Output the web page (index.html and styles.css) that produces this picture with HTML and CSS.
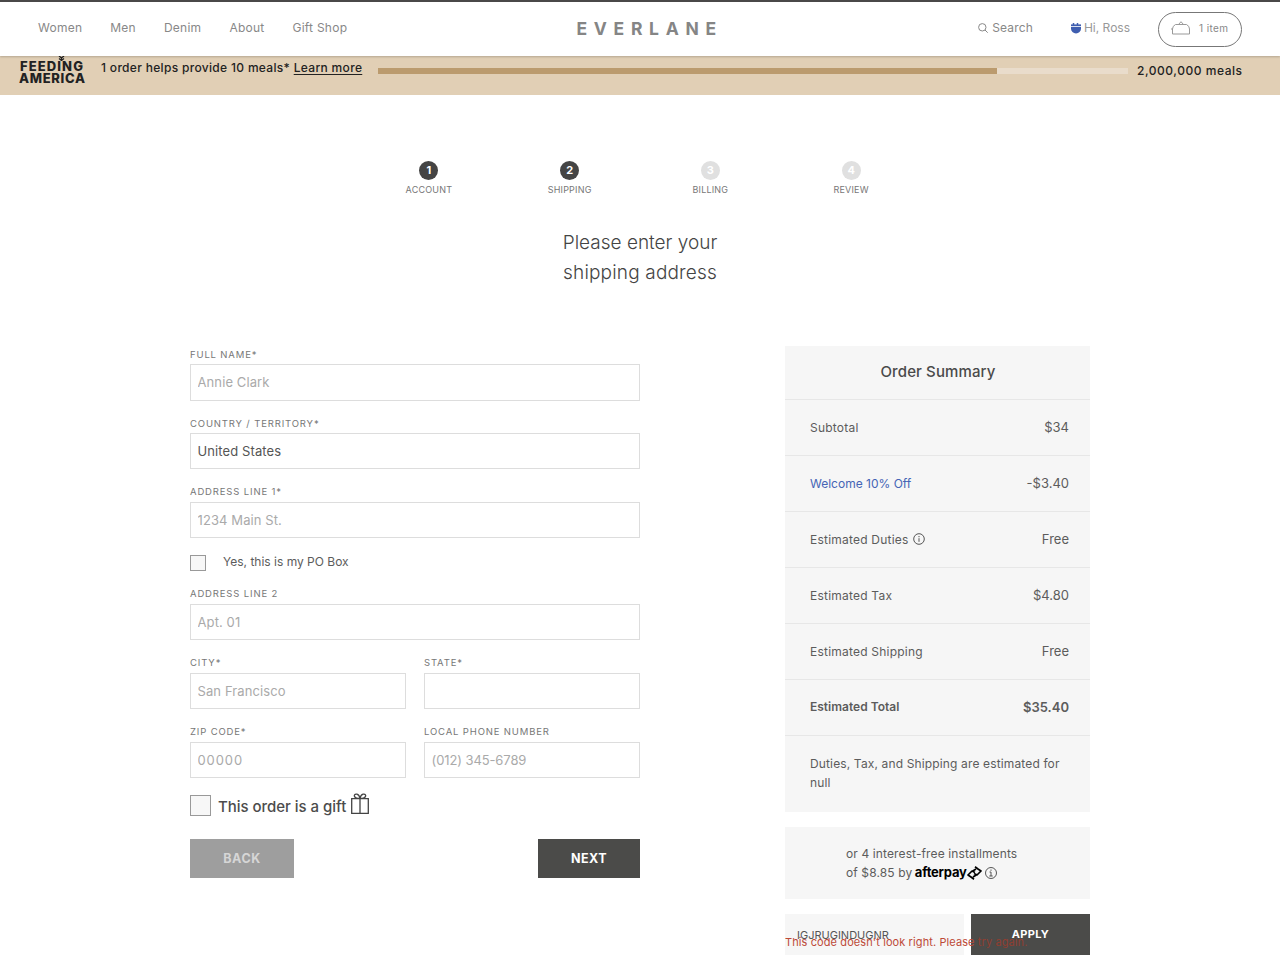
FILE: index.html
```html
<!doctype html>
<html lang="en">
<head>
  <meta charset="utf-8">
  <title>Everlane - Shipping</title>
  <link rel="stylesheet" href="styles.css">
</head>
<body>
  <header class="header">
    <nav class="nav">
      <a>Women</a>
      <a>Men</a>
      <a>Denim</a>
      <a>About</a>
      <a>Gift Shop</a>
    </nav>
    <div class="logo">EVERLANE</div>
    <div class="tools">
      <a class="search">
        <svg width="10" height="10" viewBox="0 0 10 10" fill="none" stroke="#888"><circle cx="4.3" cy="4.3" r="3.7"/><path d="M7 7l2.7 2.7"/></svg>
        <span>Search</span>
      </a>
      <a class="account">
        <svg width="10" height="12" viewBox="0 0 10 12"><path d="M0 5h10v1.500a5 5 0 0 1-10 0z" fill="#3f5eb0"/><path d="M0 3.300h10" stroke="#3f5eb0" stroke-width="1.800"/><path d="M2.500 1v2M6.500 1v2" stroke="#3f5eb0" stroke-width="1.500"/></svg>
        <span>Hi, Ross</span>
      </a>
      <a class="bag">
        <svg width="20" height="14" viewBox="0 0 20 14" fill="none" stroke="#999"><path d="M4.500 3.500h11q3 1.500 3 4.500v5h-17V8q0-3 3-4.500zM7.500 3.500L10 .7l2.500 2.800M0 8h1.500"/></svg>
        <span>1 item</span>
      </a>
    </div>
  </header>

  <section class="banner">
    <div class="feeding">
      <svg class="wheat" width="7" height="5" viewBox="0 0 7 5" stroke="#222" stroke-width="1.3"><path d="M1 0l2.500 2L6 0M1 2.500l2.500 2 2.500-2M3.500 1v4" fill="none"/></svg>
      <span class="feeding-top">FEEDING</span>
      <span class="feeding-bottom">AMERICA</span>
    </div>
    <p class="banner-text">1 order helps provide 10 meals* <u>Learn more</u></p>
    <div class="progress"><div class="progress-bar"></div></div>
    <span class="meals">2,000,000 meals</span>
  </section>

  <ol class="steps">
    <li class="done"><b>1</b><span>ACCOUNT</span></li>
    <li class="done"><b>2</b><span>SHIPPING</span></li>
    <li><b>3</b><span>BILLING</span></li>
    <li><b>4</b><span>REVIEW</span></li>
  </ol>

  <h1>Please enter your<br><span>shipping address</span></h1>

  <main class="checkout">
    <form class="shipping">
      <div class="field first">
        <label>FULL NAME*</label>
        <input type="text" placeholder="Annie Clark">
      </div>
      <div class="field country">
        <label>COUNTRY / TERRITORY*</label>
        <input type="text" value="United States">
      </div>
      <div class="field">
        <label>ADDRESS LINE 1*</label>
        <input type="text" placeholder="1234 Main St.">
      </div>
      <div class="po-box"><i class="box"></i><span>Yes, this is my PO Box</span></div>
      <div class="field">
        <label>ADDRESS LINE 2</label>
        <input type="text" placeholder="Apt. 01">
      </div>
      <div class="field-row">
        <div class="field">
          <label>CITY*</label>
          <input type="text" placeholder="San Francisco">
        </div>
        <div class="field">
          <label>STATE*</label>
          <input type="text">
        </div>
      </div>
      <div class="field-row">
        <div class="field">
          <label>ZIP CODE*</label>
          <input type="text" class="zip" placeholder="00000">
        </div>
        <div class="field">
          <label>LOCAL PHONE NUMBER</label>
          <input type="text" class="phone" placeholder="(012) 345-6789">
        </div>
      </div>
      <div class="gift">
        <i class="box"></i>
        <span>This order is a gift</span>
        <svg width="18" height="22" viewBox="0 0 18 22" fill="none" stroke="#444" stroke-width="1.300"><path d="M.7 5.700h16.600v14.600H.7zM9 5.500v14.800M9 5.500C6 5.500 3 4.500 3.300 2.500S8 0 9 5.500zM9 5.500c3 0 6-1 5.700-3S10 0 9 5.500z"/></svg>
      </div>
      <div class="buttons">
        <button type="button" class="back">BACK</button>
        <button type="button" class="next">NEXT</button>
      </div>
    </form>

    <aside class="sidebar">
      <div class="summary">
        <h2>Order Summary</h2>
        <div class="line"><span>Subtotal</span><em>$34</em></div>
        <div class="line promo"><span>Welcome 10% Off</span><em>-$3.40</em></div>
        <div class="line">
          <span>Estimated Duties <svg class="info" width="12" height="12" viewBox="0 0 12 12" fill="none" stroke="#555"><circle cx="6" cy="6" r="5.300"/><path d="M6 5.200v3.600M6 3v1.200"/></svg></span>
          <em>Free</em>
        </div>
        <div class="line"><span>Estimated Tax</span><em>$4.80</em></div>
        <div class="line"><span>Estimated Shipping</span><em>Free</em></div>
        <div class="line total"><span>Estimated Total</span><em>$35.40</em></div>
        <p class="note">Duties, Tax, and Shipping are estimated for null</p>
      </div>

      <div class="installments">
        <div>or 4 interest-free installments</div>
        <div class="by">of $8.85 by <strong>afterpay</strong><svg class="loop" width="15" height="14" viewBox="0 0 15 14" fill="none" stroke="#000" stroke-width="1.700" stroke-linejoin="round"><path d="M5 5.500L9 3M8 .8L11 3 14 5 10 9 7 7.500M10 8.500L6 11M7 13.200L4 11 1 9 5 5 8 6.500"/></svg><svg class="info" width="12" height="12" viewBox="0 0 12 12" fill="none" stroke="#444" stroke-width=".9"><circle cx="6" cy="6" r="5.500"/><path d="M4.500 5H6v4M4.300 9h3.400M6 2.500v1.300"/></svg></div>
      </div>

      <div class="coupon">
        <input type="text" value="IGJRUGINDUGNR">
        <button type="button">APPLY</button>
        <p class="error">This code doesn't look right. Please <span>try again.</span></p>
      </div>
    </aside>
  </main>
</body>
</html>
```

FILE: styles.css
```css
/* ========== Base ========== */
* {
  box-sizing: border-box;
}

body {
  margin: 0;
  height: 969px;
  overflow: hidden;
  font-family: Inter, "Liberation Sans", sans-serif;
  font-size: 12px;
  color: #5c5c5c;
  background: #fff;
}

input,
button {
  font-family: inherit;
  border-radius: 0;
  outline: none;
}

svg {
  flex: none;
}

/* ========== Header ========== */
.header {
  position: relative;
  z-index: 2;
  display: grid;
  grid-template-columns: 1fr auto 1fr;
  align-items: center;
  height: 56px;
  padding: 0 38px;
  border-top: 2px solid #4a4848;
  background: #fff;
  box-shadow: 0 1px 2px rgba(0, 0, 0, 0.2);
  color: #888;
}

.nav {
  display: flex;
  gap: 28px;
  letter-spacing: 0.25px;
}

.nav a,
.search,
.account {
  margin-top: -3px;
}

.logo {
  width: 142px;
  margin-left: 15px;
  font-weight: 700;
  font-size: 17.5px;
  line-height: 22px;
  letter-spacing: 6.7px;
  white-space: nowrap;
  color: #858585;
}

.tools {
  display: flex;
  justify-content: flex-end;
  align-items: center;
}

.search,
.account,
.bag {
  display: flex;
  align-items: center;
}

.search {
  gap: 4px;
  margin-right: 38px;
  letter-spacing: 0.15px;
}

.account {
  gap: 3px;
  margin-right: 28px;
}

.account span {
  color: #999;
}

.bag {
  gap: 8px;
  width: 84px;
  height: 35px;
  padding: 0 0 2px 12px;
  border: 1px solid #777;
  border-radius: 18px;
  font-size: 10px;
  letter-spacing: 0.4px;
}

/* ========== Meals Banner ========== */
.banner {
  display: flex;
  height: 39px;
  padding: 0 38px 0 19px;
  background: #e1cfb5;
  color: #222;
  font-weight: 500;
  letter-spacing: 0.32px;
}

.feeding {
  position: relative;
  width: 82px;
  padding-top: 4px;
  font-weight: 800;
  font-size: 13px;
  line-height: 12px;
}

.feeding span {
  display: block;
}

.feeding-top {
  padding-left: 1px;
  letter-spacing: 1.1px;
}

.feeding-bottom {
  letter-spacing: 0.7px;
}

.wheat {
  position: absolute;
  left: 39px;
  top: 0;
}

.banner-text {
  margin: 4px 15px 0 0;
  width: 262px;
  line-height: 15px;
  white-space: nowrap;
}

.banner-text u {
  text-underline-offset: 2px;
}

.progress {
  flex: 1;
  height: 6px;
  margin-top: 12px;
  margin-right: 9px;
  background: #e9dccb;
}

.progress-bar {
  width: 619px;
  height: 6px;
  background: #bb9b6e;
}

.meals {
  width: 105px;
  margin-top: 7px;
  line-height: 15px;
  letter-spacing: 0.54px;
  white-space: nowrap;
}

/* ========== Steps ========== */
.steps {
  display: flex;
  width: 563px;
  margin: 66px auto 0;
  padding: 0;
  list-style: none;
}

.steps li {
  flex: 1;
  display: flex;
  flex-direction: column;
  align-items: center;
  font-size: 9px;
  line-height: 12px;
  letter-spacing: 0.2px;
  color: #777;
}

.steps b {
  width: 19px;
  height: 19px;
  margin-bottom: 4px;
  border-radius: 50%;
  background: #e0e0e0;
  color: #fff;
  font-size: 11px;
  line-height: 19px;
  letter-spacing: 0;
  text-align: center;
}

.steps .done b {
  background: #444;
}

h1 {
  margin: 32px 0 0;
  font-size: 19px;
  line-height: 30px;
  font-weight: 300;
  text-align: center;
  color: #444;
}

h1 span {
  letter-spacing: 0.17px;
}

/* ========== Shipping Form ========== */
.checkout {
  display: flex;
  justify-content: space-between;
  width: 900px;
  margin: 58px auto 0;
}

.shipping {
  width: 450px;
}

.field {
  flex: 1;
  margin-bottom: 15px;
}

.field label {
  display: block;
  height: 18px;
  font-size: 9.5px;
  line-height: 15px;
  letter-spacing: 0.85px;
  color: #777;
}

.field input {
  display: block;
  width: 100%;
  height: 36px;
  padding: 0 6.5px;
  border: 1px solid #ddd;
  font-size: 13px;
  letter-spacing: 0.1px;
  color: #555;
}

.field.first {
  margin-bottom: 14px;
}

.field.first label,
.field.country label {
  line-height: 17px;
}

.field.first input {
  height: 37px;
  padding-bottom: 2px;
}

.field input::placeholder {
  color: #aaa;
}

.field input.zip {
  letter-spacing: 0.9px;
}

.field input.phone {
  letter-spacing: -0.1px;
}

.field-row {
  display: flex;
  gap: 18px;
}

.box {
  flex: none;
  border: 1px solid #999;
  background: #f7f7f7;
}

.po-box {
  display: flex;
  height: 33px;
  padding-top: 2px;
}

.po-box .box {
  width: 16px;
  height: 16px;
  margin-right: 17px;
}

.po-box span {
  line-height: 13px;
}

.gift {
  display: flex;
  height: 46px;
  font-size: 15px;
  font-weight: 500;
  line-height: 28px;
  letter-spacing: -0.03px;
  color: #4c4c4c;
}

.gift .box {
  width: 21px;
  height: 21px;
  margin: 2px 7px 0 0;
}

.gift svg {
  margin-left: 5px;
}

.buttons {
  display: flex;
  justify-content: space-between;
}

.buttons button {
  height: 39px;
  padding: 0;
  border: none;
  font-size: 12.5px;
  font-weight: 700;
  letter-spacing: 0.5px;
}

.back {
  width: 104px;
  background: #9e9e9e;
  color: #d6d6d6;
}

.next {
  width: 102px;
  background: #4b4b49;
  color: #fff;
}

/* ========== Order Summary ========== */
.sidebar {
  width: 305px;
}

.summary,
.installments {
  background: #f6f6f6;
}

.summary {
  height: 466px;
}

.summary h2 {
  height: 53px;
  margin: 0;
  padding-left: 1px;
  font-size: 15px;
  font-weight: 500;
  line-height: 51px;
  letter-spacing: 0.12px;
  text-align: center;
  color: #4a4a4a;
}

.line {
  display: flex;
  justify-content: space-between;
  align-items: center;
  height: 56px;
  padding: 0 21px 0 25px;
  border-top: 1px solid #e7e7e7;
  letter-spacing: 0.22px;
}

.line em {
  margin-top: -1px;
  font-style: normal;
  font-size: 13px;
  letter-spacing: 0;
}

.line .info {
  margin-left: 1px;
  vertical-align: -1px;
}

.promo span {
  letter-spacing: 0;
  color: #4565b5;
}

.total {
  font-weight: 600;
}

.total span {
  margin-top: -2px;
  letter-spacing: 0;
}

.note {
  margin: 0;
  padding: 18px 25px;
  border-top: 1px solid #e7e7e7;
  line-height: 19px;
  letter-spacing: 0.14px;
}

.installments {
  height: 72px;
  margin-top: 15px;
  padding: 17px 0 0 61px;
  line-height: 19px;
  letter-spacing: 0.12px;
  white-space: nowrap;
}

.by {
  display: flex;
  align-items: center;
  white-space: pre;
}

.by strong {
  margin-left: -1px;
  font-size: 13px;
  letter-spacing: -0.2px;
  color: #000;
}

.by .info {
  margin-left: 3px;
}

/* ========== Coupon ========== */
.coupon {
  position: relative;
  display: flex;
  gap: 7px;
  margin-top: 15px;
}

.coupon input {
  width: 179px;
  height: 41px;
  padding: 1px 12px 0;
  border: none;
  background: #f6f6f6;
  font-size: 11px;
  color: #555;
}

.coupon button {
  width: 119px;
  height: 41px;
  padding: 0 0 2px;
  border: none;
  background: #4b4b49;
  color: #fff;
  font-size: 11px;
  font-weight: 700;
  letter-spacing: 0.3px;
}

/* the error sits on top of the code field and the button */
.error {
  position: absolute;
  left: 0;
  top: 20px;
  margin: 0;
  font-size: 11px;
  line-height: 16px;
  letter-spacing: 0.1px;
  white-space: nowrap;
  color: #bd4a38;
}

.error span {
  color: #903e31;
}
```
